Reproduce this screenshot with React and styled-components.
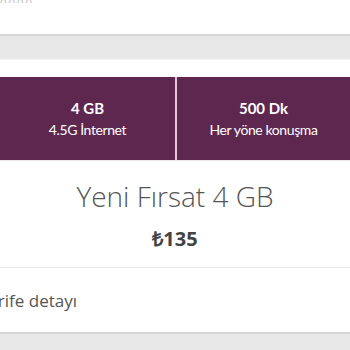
import styled, { createGlobalStyle } from "styled-components";

const GlobalStyle = createGlobalStyle`
  body {
    margin: 0;
    background: #fff;
    font-family: "Open Sans", "Liberation Sans", sans-serif;
  }
`;

const Page = styled.div`
  width: 350px;
  height: 350px;
  overflow: hidden;
  display: flex;
  flex-direction: column;
`;

const StatusBar = styled.div`
  height: 34px;
  display: flex;
  justify-content: space-between;
  padding: 0 14px 0 0;
  overflow: hidden;
  font-size: 13px;
  color: #c8c8c8;
  line-height: 14px;
`;

const StatusText = styled.span`
  margin-top: -9px;
  letter-spacing: 2px;
`;

const GreyBand = styled.div`
  height: 23px;
  background: #e8e8e8;
  border-top: 2px solid #d6d6d6;
  border-bottom: 1px solid #f4f4f4;
`;

const Spacer = styled.div`
  height: 17px;
  background: #fff;
`;

const Features = styled.div`
  display: grid;
  grid-template-columns: 175px 2px 1fr;
  height: 83px;
  background: #5e2750;
  border-bottom: 1px solid #efe3ec;
`;

const Divider = styled.div`
  background: #e6c6de;
`;

const Feature = styled.div`
  display: flex;
  flex-direction: column;
  align-items: center;
  justify-content: center;
  color: #fff;
  font-family: Lato, "Open Sans", sans-serif;
`;

const FeatureValue = styled.div`
  font-size: 15px;
  font-weight: 700;
  line-height: 22px;
`;

const FeatureLabel = styled.div`
  font-size: 14px;
  line-height: 22px;
  letter-spacing: -0.4px;
`;

const Offer = styled.div`
  display: flex;
  flex-direction: column;
  align-items: center;
  padding-top: 15px;
  border-bottom: 1px solid #e6e6e6;
  box-sizing: border-box;
  height: 107px;
`;

const Title = styled.div`
  font-size: 28px;
  font-weight: 300;
  color: #555;
  line-height: 40px;
`;

const Price = styled.div`
  font-size: 20px;
  font-weight: 700;
  color: #444;
  line-height: 28px;
  margin-top: 9px;
`;

const DetailRow = styled.div`
  height: 66px;
  display: flex;
  align-items: center;
  border-bottom: 2px solid #d6d6d6;
  box-sizing: border-box;
  overflow: hidden;
`;

const DetailText = styled.span`
  font-size: 17px;
  color: #555;
  margin-left: -21px;
  white-space: nowrap;
`;

const BottomBand = styled.div`
  flex: 1;
  background: #e8e8e8;
`;

export default function App() {
  return (
    <Page>
      <GlobalStyle />
      <StatusBar>
        <StatusText>ʌʌʌʌ</StatusText>
        <StatusText>··· · ··</StatusText>
      </StatusBar>
      <GreyBand />
      <Spacer />
      <Features>
        <Feature>
          <FeatureValue>4 GB</FeatureValue>
          <FeatureLabel>4.5G İnternet</FeatureLabel>
        </Feature>
        <Divider />
        <Feature>
          <FeatureValue>500 Dk</FeatureValue>
          <FeatureLabel>Her yöne konuşma</FeatureLabel>
        </Feature>
      </Features>
      <Offer>
        <Title>Yeni Fırsat 4 GB</Title>
        <Price>₺135</Price>
      </Offer>
      <DetailRow>
        <DetailText>Tarife detayı</DetailText>
      </DetailRow>
      <BottomBand />
    </Page>
  );
}
